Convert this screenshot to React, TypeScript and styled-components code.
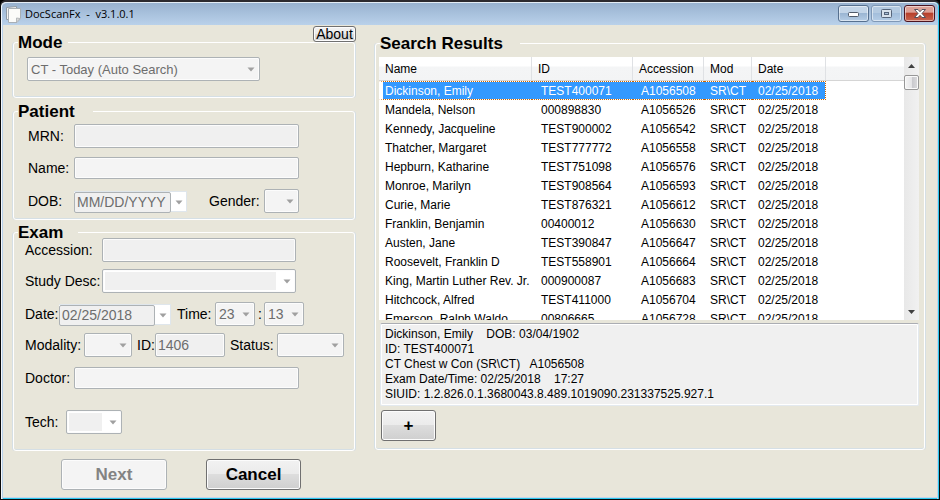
import React from "react";
import styled, { createGlobalStyle, css } from "styled-components";

const SANS = '"Liberation Sans", Arial, sans-serif';

const Global = createGlobalStyle`
  *, *::before, *::after { box-sizing: border-box; }
  html, body { margin: 0; background: #000; }
  body, button, input, select, textarea { font-family: ${SANS}; }
`;

const Window = styled.div`
  display: flex;
  flex-direction: column;
  min-height: 100vh;
  background: #e8e6da;
  border: 1px solid #0b0b0b;
  border-top: 2px solid #2c2a2f;
  border-radius: 6px 6px 0 0;
  box-shadow: inset 1px 0 #f4f8fc, inset 2px 0 #b9d1ea, inset -1px 0 #2cc8ee, inset -2px 0 #c5d6ea, inset 0 -1px #2cc8ee, inset 0 -2px #c5d6ea;
`;

const TitleBar = styled.header`
  display: flex;
  align-items: center;
  height: 23px;
  margin: 0 1px;
  padding: 0 3px 0 4px;
  background: linear-gradient(#98b2d0, #b9d1ea);
  border-top: 1px solid #e4edf6;
  border-radius: 5px 5px 0 0;

  > svg { flex: none; }
`;

const Title = styled.h1`
  flex: 1;
  margin: 0 0 0 4px;
  font: 400 11px/20px "Open Sans", "Noto Sans", sans-serif;
  color: #000;
  white-space: pre;
`;

const Caption = styled.button<{ $kind?: "close" | "off" }>`
  display: grid;
  place-items: center;
  align-self: flex-start;
  width: 31px;
  height: 17px;
  margin: 2px 0 0 2px;
  padding: 0;
  border: 1px solid #56708f;
  border-radius: 3px;
  background: linear-gradient(#c3d5e8 0 45%, #9bb6d3 50%, #b5cde6);
  box-shadow: inset 0 0 0 1px rgba(255, 255, 255, 0.5);
  ${(p) => p.$kind === "off" && css`border-color: #7f98b6; background: linear-gradient(#b4cae1 0 45%, #a3bedb 50%, #b5cde6);`}
  ${(p) => p.$kind === "close" && css`border-color: #4b1420; background: linear-gradient(#dda197 0 40%, #b7402c 50%, #c96550);`}
`;

const Body = styled.main`
  display: grid;
  grid-template-columns: 344px minmax(0, 1fr);
  column-gap: 18px;
  padding: 1px 13px 9px 11px;
  flex: 1;
  align-items: start;
`;

const Column = styled.div`
  display: flex;
  flex-direction: column;
`;

const Group = styled.fieldset<{ $gap?: number }>`
  min-width: 0;
  margin: ${(p) => p.$gap ?? 0}px 1px 0;
  padding: 0;
  border: 1px solid #fff;
  border-radius: 3px;
  box-shadow: 1px 0 #d5dfe5, -1px 0 #d5dfe5, inset 0 -1px #d5dfe5;
`;

const Legend = styled.legend<{ $w: number }>`
  min-width: ${(p) => p.$w}px;
  height: 1px;
  margin-left: 4px;
  padding: 0;
  font-size: 17px;
  font-weight: 700;
  line-height: 1px;
  color: #000;
`;

const GroupBody = styled.div<{ $pad: string }>`
  padding: ${(p) => p.$pad};
`;

const Row = styled.div<{ $gap?: number; $indent?: number }>`
  display: flex;
  align-items: center;
  margin-top: ${(p) => p.$gap ?? 0}px;
  padding-left: ${(p) => p.$indent ?? 0}px;
`;

const Label = styled.label<{ $w: number; $before?: number }>`
  flex: none;
  width: ${(p) => p.$w}px;
  margin-left: ${(p) => p.$before ?? 0}px;
  font-size: 14px;
  line-height: 20px;
  color: #000;
  white-space: nowrap;
`;

const field = css<{ $w: number; $h?: number; $flat?: boolean }>`
  width: ${(p) => p.$w}px;
  height: ${(p) => p.$h ?? 24}px;
  border: 1px solid #adb2b5;
  border-radius: 2px;
  background: ${(p) => (p.$flat ? "#f4f4f4" : "#f0f0f0")};
  box-shadow: inset 0 0 0 1px #fcfcfc;
  color: #6d6d6d;
  opacity: 1;
`;

const TextBox = styled.input<{ $w: number; $h?: number; $flat?: boolean }>`
  ${field}
  margin: 0;
  padding: 0 2px;
  font-size: 14px;
`;

const ComboFrame = styled.span<{ $w: number; $h?: number; $flat?: boolean; $open?: boolean }>`
  ${field}
  display: grid;
  grid-template-columns: minmax(0, 1fr) 17px;
  align-items: center;
  flex: none;
  ${(p) => p.$open && css`padding: 2px 0 2px 2px; background: #fff;`}

  svg {
    grid-area: 1 / 2;
    justify-self: center;
    pointer-events: none;
  }
`;

const ComboSelect = styled.select<{ $open?: boolean; $size: number }>`
  grid-area: 1 / 1 / 2 / 3;
  width: ${(p) => (p.$open ? "calc(100% - 19px)" : "100%")};
  height: 100%;
  margin: 0;
  padding: 0 0 0 3px;
  appearance: none;
  border: 0;
  background: ${(p) => (p.$open ? "#f0f0f0" : "transparent")};
  font-size: ${(p) => p.$size}px;
  color: #6d6d6d;
  opacity: 1;
`;

const DateFrame = styled.span<{ $w: number }>`
  display: grid;
  grid-template-columns: minmax(0, 1fr) 15px;
  align-items: center;
  justify-items: center;
  width: ${(p) => p.$w}px;
  height: 21px;
  background: #fff;
  border: 1px solid #dfe6ec;
  border-left: 0;
`;

const DateInput = styled.input`
  width: 100%;
  height: 21px;
  margin: 0;
  padding: 0 2px;
  border: 1px solid #adb2b5;
  border-radius: 2px;
  background: #f0f0f0;
  font-size: 14px;
  color: #6d6d6d;
`;

const Push = styled.button<{ $w: number }>`
  width: ${(p) => p.$w}px;
  height: 31px;
  padding: 0;
  border: 1px solid #707070;
  border-radius: 3px;
  background: linear-gradient(#f2f2f2, #ebebeb 48%, #dddddd 50%, #cfcfcf);
  box-shadow: inset 0 0 0 1px #fcfcfc;
  font-size: 17px;
  font-weight: 700;
  color: #000;

  &:disabled {
    border-color: #adb2b5;
    background: #f4f4f4;
    color: #838383;
  }
`;

const AboutButton = styled(Push)`
  align-self: flex-end;
  height: 16px;
  font-size: 14px;
  font-weight: 400;
  line-height: 14px;
`;

const Actions = styled.div`
  display: flex;
  gap: 39px;
  margin-top: 8px;
  padding-left: 49px;
`;

const ListView = styled.div`
  display: grid;
  grid-template-columns: minmax(0, 1fr) 15px;
  height: 263px;
  background: #fff;
`;

const ListScroll = styled.div`
  overflow: hidden;
`;

const Table = styled.table`
  width: 100%;
  table-layout: fixed;
  border-collapse: separate;
  border-spacing: 0;
  font-size: 12px;
  color: #000;
`;

const Col = styled.col<{ $w?: number }>`
  width: ${(p) => (p.$w ? `${p.$w}px` : "auto")};
`;

const Th = styled.th`
  height: 24px;
  padding: 0 0 0 6px;
  border-right: 1px solid #dfe1e4;
  border-bottom: 1px solid #d5d5d5;
  background: linear-gradient(#fff 0 9px, #f4f5f6 10px, #f3f4f5);
  background-clip: padding-box;
  font-weight: 400;
  text-align: left;

  &:last-child { border-right: 0; }
`;

const Tr = styled.tr<{ $selected: boolean }>`
  ${(p) => p.$selected && css`
    color: #fff;
    td:not(:last-child) {
      background: #3399ff;
      background-clip: padding-box;
      border-top: 1px dotted #cc6600;
      border-bottom: 1px dotted #cc6600;
    }
    td:nth-child(5) { border-right: 1px dotted #cc6600; }
  `}
`;

const Td = styled.td`
  height: 19px;
  padding: 0 0 0 7px;
  line-height: 16px;
  white-space: nowrap;

  &:first-child { padding-left: 2px; border-left: 4px solid transparent; }
  &:nth-child(2) { padding-left: 9px; }
  &:nth-child(3) { padding-left: 8px; }
  &:nth-child(4), &:nth-child(5) { padding-left: 6px; }
`;

const ScrollBar = styled.div`
  display: flex;
  flex-direction: column;
  align-items: center;
  background: linear-gradient(90deg, #e8e8e8, #f1f1f1);
`;

const ScrollArrow = styled.button`
  display: grid;
  place-items: center;
  width: 15px;
  height: 17px;
  padding: 0;
  border: 0;
  background: transparent;

  &:last-child { margin-top: auto; }
`;

const Thumb = styled.div`
  width: 15px;
  height: 15px;
  margin-top: 1px;
  border: 1px solid #979797;
  border-radius: 2px;
  background: linear-gradient(90deg, #f5f5f5, #e5e5e7 50%, #c9c9cd 55%, #dcdcde);
  box-shadow: inset 0 0 0 1px #fafafa;
`;

const Details = styled.textarea`
  display: block;
  width: calc(100% - 1px);
  height: 83px;
  margin: 3px 0 4px 1px;
  padding: 3px 4px;
  border: 1px solid #e3e9ef;
  border-top-color: #abadb3;
  border-radius: 2px;
  background: #f0f0f0;
  box-shadow: inset 0 0 0 1px #fff;
  font-size: 12px;
  line-height: 15px;
  color: #000;
  resize: none;
  overflow: hidden;
  outline: 0;
`;

const Arrow = () => (
  <svg width="8" height="5" viewBox="0 0 8 5" aria-hidden="true">
    <path d="M0.5 0.5H7.5L4 4.5Z" fill="#a0a0a0" />
  </svg>
);

type ComboProps = { id: string; w: number; h?: number; value?: string; open?: boolean; name?: string; size?: number };

const Combo = ({ id, w, h, value = "", open, name, size = 14 }: ComboProps) => (
  <ComboFrame $w={w} $h={h} $open={open} $flat>
    <ComboSelect id={id} disabled $open={open} $size={size} aria-label={name} defaultValue={value}>
      <option>{value}</option>
    </ComboSelect>
    <Arrow />
  </ComboFrame>
);

const DateBox = ({ id, w, value }: { id: string; w: number; value: string }) => (
  <DateFrame $w={w}>
    <DateInput id={id} disabled defaultValue={value} />
    <Arrow />
  </DateFrame>
);

const patients: [string, string, string][] = [
  ["Dickinson, Emily", "TEST400071", "A1056508"],
  ["Mandela, Nelson", "000898830", "A1056526"],
  ["Kennedy, Jacqueline", "TEST900002", "A1056542"],
  ["Thatcher, Margaret", "TEST777772", "A1056558"],
  ["Hepburn, Katharine", "TEST751098", "A1056576"],
  ["Monroe, Marilyn", "TEST908564", "A1056593"],
  ["Curie, Marie", "TEST876321", "A1056612"],
  ["Franklin, Benjamin", "00400012", "A1056630"],
  ["Austen, Jane", "TEST390847", "A1056647"],
  ["Roosevelt, Franklin D", "TEST558901", "A1056664"],
  ["King, Martin Luther Rev. Jr.", "000900087", "A1056683"],
  ["Hitchcock, Alfred", "TEST411000", "A1056704"],
  ["Emerson, Ralph Waldo", "00806665", "A1056728"],
];

const details = [
  "Dickinson, Emily    DOB: 03/04/1902",
  "ID: TEST400071",
  "CT Chest w Con (SR\\CT)   A1056508",
  "Exam Date/Time: 02/25/2018    17:27",
  "SIUID: 1.2.826.0.1.3680043.8.489.1019090.231337525.927.1",
].join("\n");

export default function App() {
  return (
    <>
      <Global />
      <Window>
        <TitleBar>
          <svg width="15" height="17" viewBox="0 0 15 17" aria-hidden="true">
            <path d="M0.5 1.5L10.5 0.5V13.5H0.5Z" fill="#f2f2f0" stroke="#8f9aa5" />
            <path d="M2.5 2.5H14.5V12.5L11 16.5H2.5Z" fill="#fbfbf9" stroke="#a8afb5" />
            <path d="M14 12.5L10.5 12V16Z" fill="#dcdcda" stroke="#b4b8bb" />
          </svg>
          <Title>{"DocScanFx  -  v3.1.0.1"}</Title>
          <Caption aria-label="Minimize">
            <svg width="12" height="6" viewBox="0 0 12 6">
              <rect x="0.5" y="1.5" width="10" height="4" rx="1" fill="#fff" stroke="#505b6b" />
            </svg>
          </Caption>
          <Caption $kind="off" aria-label="Maximize" disabled>
            <svg width="11" height="9" viewBox="0 0 11 9">
              <rect x="0.5" y="0.5" width="10" height="8" rx="1" fill="#d9e2ec" stroke="#56657a" />
              <rect x="3.5" y="3.5" width="4" height="2" fill="#a9bfd8" stroke="#56657a" />
            </svg>
          </Caption>
          <Caption $kind="close" aria-label="Close">
            <svg width="12" height="9" viewBox="0 0 12 9">
              <path d="M0.5 0.5H4L6 2.7L8 0.5H11.5L8 4.5L11.5 8.5H8L6 6.3L4 8.5H0.5L4 4.5Z" fill="#fff" stroke="#53505c" />
            </svg>
          </Caption>
        </TitleBar>
        <Body>
          <Column>
            <AboutButton $w={43}>About</AboutButton>
            <Group>
              <Legend $w={50}>Mode</Legend>
              <GroupBody $pad="14px 13px 16px">
                <Combo id="mode" name="Mode" w={233} size={13} value="CT - Today (Auto Search)" />
              </GroupBody>
            </Group>
            <Group $gap={13}>
              <Legend $w={75}>Patient</Legend>
              <GroupBody $pad="12px 10px 6px 14px">
                <Row>
                  <Label htmlFor="mrn" $w={46}>MRN:</Label>
                  <TextBox id="mrn" disabled $w={225} />
                </Row>
                <Row $gap={9}>
                  <Label htmlFor="pname" $w={46}>Name:</Label>
                  <TextBox id="pname" disabled $w={225} $h={22} $flat />
                </Row>
                <Row $gap={10}>
                  <Label htmlFor="dob" $w={46}>DOB:</Label>
                  <DateBox id="dob" w={113} value="MM/DD/YYYY" />
                  <Label htmlFor="gender" $w={55} $before={22}>Gender:</Label>
                  <Combo id="gender" w={35} />
                </Row>
              </GroupBody>
            </Group>
            <Group $gap={12}>
              <Legend $w={60}>Exam</Legend>
              <GroupBody $pad="5px 8px 16px 11px">
                <Row>
                  <Label htmlFor="acc" $w={77}>Accession:</Label>
                  <TextBox id="acc" disabled $w={194} />
                </Row>
                <Row $gap={7}>
                  <Label htmlFor="study" $w={77}>Study Desc:</Label>
                  <Combo id="study" w={194} open />
                </Row>
                <Row $gap={9}>
                  <Label htmlFor="date" $w={34}>Date:</Label>
                  <DateBox id="date" w={112} value="02/25/2018" />
                  <Label htmlFor="hour" $w={38} $before={6}>Time:</Label>
                  <Combo id="hour" w={40} value="23" />
                  <Label htmlFor="minute" $w={6} $before={3}>:</Label>
                  <Combo id="minute" w={40} value="13" />
                </Row>
                <Row $gap={7}>
                  <Label htmlFor="modality" $w={59}>Modality:</Label>
                  <Combo id="modality" w={48} />
                  <Label htmlFor="devid" $w={18} $before={5}>ID:</Label>
                  <TextBox id="devid" disabled $w={70} defaultValue="1406" />
                  <Label htmlFor="status" $w={47} $before={5}>Status:</Label>
                  <Combo id="status" w={67} />
                </Row>
                <Row $gap={10}>
                  <Label htmlFor="doctor" $w={49}>Doctor:</Label>
                  <TextBox id="doctor" disabled $w={225} $h={22} $flat />
                </Row>
                <Row $gap={21}>
                  <Label htmlFor="tech" $w={41}>Tech:</Label>
                  <Combo id="tech" w={56} open />
                </Row>
              </GroupBody>
            </Group>
            <Actions>
              <Push $w={106} disabled>Next</Push>
              <Push $w={95}>Cancel</Push>
            </Actions>
          </Column>
          <Group $gap={17}>
            <Legend $w={140}>Search Results</Legend>
            <GroupBody $pad="13px 5px 8px 3px">
              <ListView>
                <ListScroll>
                  <Table>
                    <colgroup>
                      <Col $w={153} />
                      <Col $w={101} />
                      <Col $w={71} />
                      <Col $w={48} />
                      <Col $w={74} />
                      <Col />
                    </colgroup>
                    <thead>
                      <tr>
                        <Th>Name</Th>
                        <Th>ID</Th>
                        <Th>Accession</Th>
                        <Th>Mod</Th>
                        <Th>Date</Th>
                        <Th />
                      </tr>
                    </thead>
                    <tbody>
                      {patients.map(([name, id, accession], i) => (
                        <Tr key={accession} $selected={i === 0}>
                          <Td>{name}</Td>
                          <Td>{id}</Td>
                          <Td>{accession}</Td>
                          <Td>SR\CT</Td>
                          <Td>02/25/2018</Td>
                          <Td />
                        </Tr>
                      ))}
                    </tbody>
                  </Table>
                </ListScroll>
                <ScrollBar>
                  <ScrollArrow aria-label="Scroll up">
                    <svg width="7" height="4" viewBox="0 0 7 4"><path d="M0 4L3.5 0L7 4Z" fill="#404040" /></svg>
                  </ScrollArrow>
                  <Thumb />
                  <ScrollArrow aria-label="Scroll down">
                    <svg width="7" height="4" viewBox="0 0 7 4"><path d="M0 0L3.5 4L7 0Z" fill="#404040" /></svg>
                  </ScrollArrow>
                </ScrollBar>
              </ListView>
              <Details readOnly aria-label="Exam details" value={details} />
              <Row $indent={2}>
                <Push $w={55}>+</Push>
              </Row>
            </GroupBody>
          </Group>
        </Body>
      </Window>
    </>
  );
}
